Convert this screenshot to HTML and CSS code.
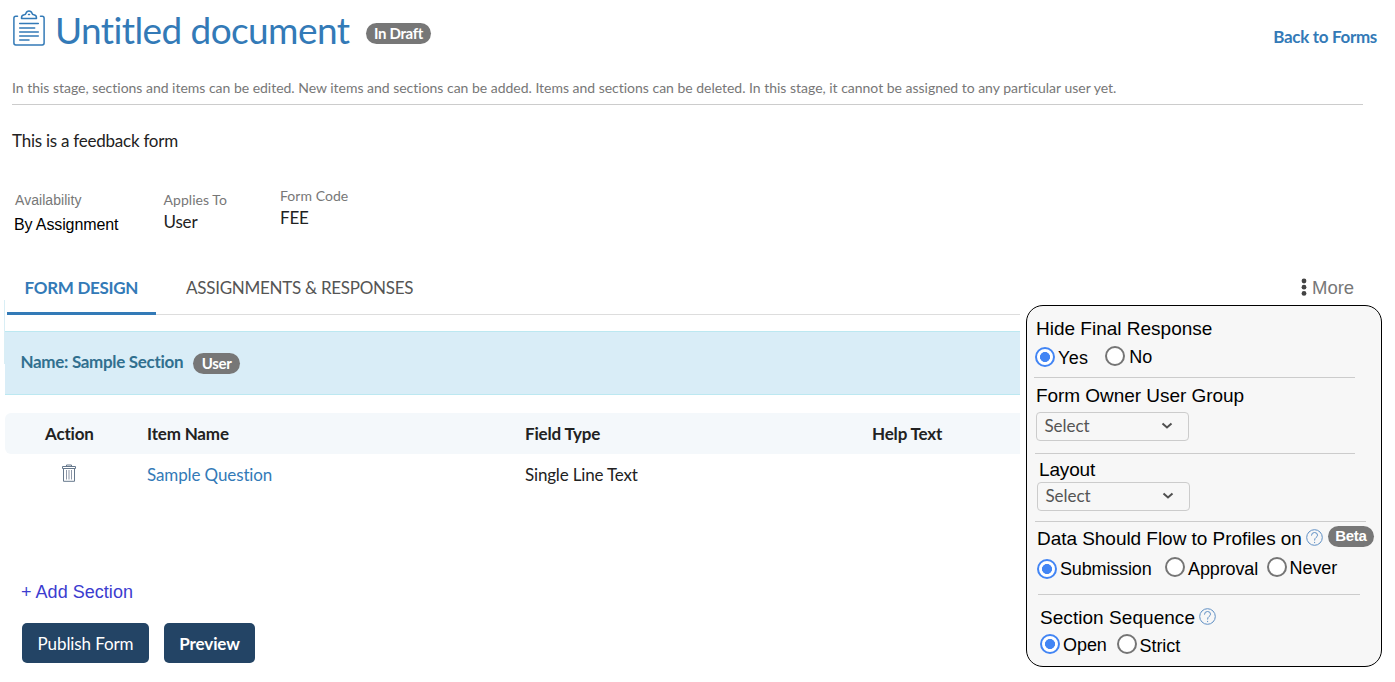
FILE: index.html
```
<!DOCTYPE html>
<html lang="en">
<head>
<meta charset="utf-8">
<title>Untitled document</title>
<link rel="stylesheet" href="styles.css">
</head>
<body>
<header class="header">
  <svg class="doc-icon" width="32" height="37" viewBox="0 0 32 37" fill="none" stroke="#337ab7" stroke-width="1.5" stroke-linecap="round" stroke-linejoin="round">
    <path d="M4.5 6.2H2.8Q.9 6.2.9 8.2V33.1Q.9 35 2.8 35H29.2Q31.1 35 31.1 33.1V8.2Q31.1 6.2 29.2 6.2H27.5"/>
    <path d="M8.5 8.4Q8.3 5 11.2 4.7Q12.6 4.6 13 3.2Q13.7.9 16 .9Q18.3.9 19 3.2Q19.4 4.6 20.8 4.7Q23.7 5 23.5 8.4Z"/>
    <path d="M15.5 4.5h1"/>
    <path d="M6.7 13.5H25.3M6.7 18H21.7M6.7 22.1H25.3M6.7 26H25.3M6.7 30H16"/>
  </svg>
  <h1 class="title">Untitled document</h1>
  <span class="badge badge-draft">In Draft</span>
  <a class="back">Back to Forms</a>
</header>
<p class="stage">In this stage, sections and items can be edited. New items and sections can be added. Items and sections can be deleted. In this stage, it cannot be assigned to any particular user yet.</p>
<p class="intro">This is a feedback form</p>
<dl class="meta">
  <div class="meta-item availability"><dt>Availability</dt><dd>By Assignment</dd></div>
  <div class="meta-item applies"><dt>Applies To</dt><dd>User</dd></div>
  <div class="meta-item code"><dt>Form Code</dt><dd>FEE</dd></div>
</dl>
<div class="content">
  <main class="design">
    <nav class="tabs">
      <a class="tab active">FORM DESIGN</a>
      <a class="tab">ASSIGNMENTS &amp; RESPONSES</a>
    </nav>
    <section class="section-bar">
      <span class="section-name">Name: Sample Section</span>
      <span class="badge badge-user">User</span>
    </section>
    <div class="row head"><span class="action">Action</span><span>Item Name</span><span>Field Type</span><span>Help Text</span></div>
    <div class="row">
      <span class="action"><svg class="trash" width="14" height="18" viewBox="0 0 14 18" fill="none" stroke="#66788c" stroke-width="1"><path d="M.5 4.5V2.5H13.5V4.5ZM4.5 2.5V1H9.5V2.5M1.5 4.5V17.3H12.5V4.5"/><path stroke="#8f98a8" d="M4.5 6V15.5M7 6V15.5M9.5 6V15.5"/></svg></span>
      <a class="link">Sample Question</a><span>Single Line Text</span><span></span>
    </div>
    <a class="add">+ Add Section</a>
    <div class="buttons"><button class="btn publish">Publish Form</button><button class="btn preview">Preview</button></div>
  </main>
  <aside class="side">
    <div class="more"><svg width="6" height="18" viewBox="0 0 6 18" fill="#444"><circle cx="3" cy="3" r="2.4"/><circle cx="3" cy="9.2" r="2.4"/><circle cx="3" cy="15.4" r="2.4"/></svg><span>More</span></div>
    <div class="panel">
      <section class="group hide">
        <h2>Hide Final Response</h2>
        <div class="options">
          <label class="yes"><i class="radio on"></i><span>Yes</span></label>
          <label class="no"><i class="radio"></i><span>No</span></label>
        </div>
      </section>
      <section class="group owner">
        <h2>Form Owner User Group</h2>
        <div class="select"><span>Select</span><svg width="12" height="8" viewBox="0 0 12 8" fill="none" stroke="#505050" stroke-width="2"><path d="M1.5 1.5L6 5.5L10.5 1.5"/></svg></div>
      </section>
      <section class="group layout">
        <h2>Layout</h2>
        <div class="select"><span>Select</span><svg width="12" height="8" viewBox="0 0 12 8" fill="none" stroke="#505050" stroke-width="2"><path d="M1.5 1.5L6 5.5L10.5 1.5"/></svg></div>
      </section>
      <section class="group flow">
        <div class="heading"><h2>Data Should Flow to Profiles on</h2>
          <svg class="help" width="17" height="17" viewBox="0 0 17 17" fill="none" stroke="#5f8fc4"><circle cx="8.5" cy="8.5" r="7.8"/><path d="M5.5 6.6Q5.5 3.5 8.5 3.5Q11.5 3.5 11.5 6.2Q11.5 7.5 10 8.5Q8.6 9.4 8.6 11.5M8.6 12.9V14.1"/></svg>
          <span class="badge badge-beta">Beta</span></div>
        <div class="options">
          <label class="submission"><i class="radio on"></i><span>Submission</span></label>
          <label class="approval"><i class="radio"></i><span>Approval</span></label>
          <label class="never"><i class="radio"></i><span>Never</span></label>
        </div>
      </section>
      <section class="group sequence">
        <div class="heading"><h2>Section Sequence</h2>
          <svg class="help" width="17" height="17" viewBox="0 0 17 17" fill="none" stroke="#5f8fc4"><circle cx="8.5" cy="8.5" r="7.8"/><path d="M5.5 6.6Q5.5 3.5 8.5 3.5Q11.5 3.5 11.5 6.2Q11.5 7.5 10 8.5Q8.6 9.4 8.6 11.5M8.6 12.9V14.1"/></svg></div>
        <div class="options">
          <label class="open"><i class="radio on"></i><span>Open</span></label>
          <label class="strict"><i class="radio"></i><span>Strict</span></label>
        </div>
      </section>
    </div>
  </aside>
</div>
</body>
</html>
```
FILE: styles.css
```
* { box-sizing: border-box; }
body { margin: 0; height: 682px; overflow: hidden; background: #fff; color: #222; font: 17px/20px Lato, sans-serif; letter-spacing: -0.17px; }
h1, h2, p, dl, dd { margin: 0; font-weight: 400; }
svg { flex: none; display: block; }

.header { display: flex; height: 74px; padding: 0 18px 0 13px; align-items: flex-start; }
.doc-icon { margin-top: 10px; }
.title { margin: 8px 0 0 10px; width: 311px; font-size: 37px; line-height: 44px; letter-spacing: -0.6px; color: #337ab7; white-space: nowrap; }
.badge { flex: none; height: 21px; border-radius: 11px; background: #777; color: #fff; font-weight: 700; font-size: 15px; line-height: 20px; letter-spacing: -0.3px; text-align: center; }
.badge-draft { width: 65px; margin-top: 23px; }
.badge-user { width: 47px; margin: 1px 0 0 10px; line-height: 21px; }
.badge-beta { width: 46px; margin: -3px 0 0 5px; }
.back { margin: 27px 0 0 auto; color: #337ab7; font-weight: 700; letter-spacing: -0.32px; }

.stage { width: 1351px; height: 31px; margin-left: 12px; padding-top: 4px; border-bottom: 1px solid #ccc; color: #777; font-size: 14px; letter-spacing: -0.015px; }
.intro { margin: 26px 0 0 12px; letter-spacing: -0.24px; }

.meta { display: flex; height: 117px; padding: 35px 0 0 14px; }
.meta dt { color: #777; font-size: 14px; letter-spacing: 0.05px; }
.availability { width: 149.5px; padding-top: 4px; font-family: "Liberation Sans", sans-serif; }
.availability dt { padding-left: 1px; }
.availability dd { margin-top: 5px; color: #000; font-size: 16px; letter-spacing: -0.12px; }
.applies { width: 116.5px; padding-top: 4px; }
.applies dd { margin-top: 2px; }
.code dd { margin-top: 2px; }

.content { display: flex; height: 414px; }
.design { width: 1020px; padding-left: 5px; background: linear-gradient(#d9eef5, #d9eef5) 4px 32px / 1px 64px no-repeat; }
.tabs { display: flex; height: 47px; margin-left: 2px; border-bottom: 1px solid #ddd; }
.tab { height: 47px; padding: 10px 30px 0; color: #555; letter-spacing: -0.27px; }
.tab.active { width: 149px; padding: 10px 0 0 17.5px; border-bottom: 3px solid #337ab7; color: #337ab7; font-weight: 700; letter-spacing: -0.3px; }
.section-bar { display: flex; height: 64px; margin-top: 16px; padding: 20px 0 0 15.5px; background: #d9edf7; border-top: 1px solid #bce8f1; border-bottom: 1px solid #bce8f1; }
.section-name { color: #31708f; font-weight: 700; letter-spacing: -0.32px; }
.row { display: grid; grid-template-columns: 142px 378px 347px 1fr; height: 41px; align-items: center; }
.head { margin-top: 18px; border-radius: 6px 0 0 6px; background: #f4f8fb; font-weight: 700; }
.action { padding-left: 40px; }
.trash { margin: -4px 0 0 17px; }
.link { color: #337ab7; letter-spacing: -0.12px; }
.add { display: block; margin: 87px 0 0 16px; color: #3c3ccf; font: 18px/20px "Liberation Sans", sans-serif; letter-spacing: 0.03px; }
.buttons { display: flex; gap: 15px; margin: 21px 0 0 17px; }
.btn { height: 40px; padding: 2px 0 0; border: 0; border-radius: 5px; background: #234465; color: #fff; font: 17px/20px Lato, sans-serif; letter-spacing: -0.1px; }
.publish { width: 127px; }
.preview { width: 91px; font-weight: 700; letter-spacing: -0.1px; }

.side { width: 356px; margin-left: 6px; font-family: "Liberation Sans", sans-serif; letter-spacing: 0; color: #000; }
.more { display: flex; height: 37px; padding: 10px 0 0 275px; gap: 5px; color: #777; font-size: 18.5px; }
.panel { height: 362px; padding: 13px 7px 0 7px; border: 1px solid #000; border-radius: 17px; background: #f7f7f7; }
.group { border-bottom: 1px solid #ccc; }
h2 { font-size: 19px; line-height: 20px; white-space: nowrap; }
.options, .heading, label { display: flex; }
label { font-size: 18px; letter-spacing: -0.05px; gap: 3px; align-items: flex-start; }
.radio { flex: none; width: 20px; height: 20px; border: 2px solid #757575; border-radius: 50%; background: #fff; }
.radio.on { border-color: #4285f4; background: radial-gradient(circle, #4285f4 4.7px, #fff 5.3px); }
.hide { width: 321px; height: 59px; }
.hide h2, .owner h2 { padding-left: 2px; }
.hide .options { margin-top: 7px; padding-left: 1px; gap: 17px; }
.yes { letter-spacing: 0.3px; }
.yes .radio { margin-top: 1px; } .yes span { margin-top: 2px; }
.no { gap: 4px; } .no span { margin-top: 1px; }
.owner { width: 320px; height: 76px; margin-left: 1px; padding-top: 8px; }
.owner h2 { padding-left: 1px; letter-spacing: -0.05px; }
.owner .select { margin: 6px 0 0 1px; }
.select { display: flex; width: 153px; height: 29px; padding: 0 15px 2px 7.5px; align-items: center; justify-content: space-between; border: 1px solid #ccc; border-radius: 4px; color: #555; font-family: Lato, sans-serif; letter-spacing: -0.05px; }
.layout { width: 331px; height: 68px; margin-left: 1px; padding-top: 6px; }
.layout h2 { padding-left: 4px; letter-spacing: -0.15px; }
.layout .select { margin: 2px 0 0 2px; }
.flow { width: 322px; height: 73px; margin-left: 4px; padding-top: 7px; }
.flow .heading, .flow .options { margin-left: -1px; }
.flow h2 { letter-spacing: -0.04px; }
.flow .help { margin: 0 0 0 4px; }
.flow .options { margin-top: 8px; }
.flow .radio.on { margin-top: 2px; } .flow .on + span { margin-top: 2px; }
.submission { width: 128px; letter-spacing: -0.15px; }
.approval { width: 102px; } .approval span { margin-top: 2px; letter-spacing: -0.13px; }
.never { gap: 2.5px; } .never span { margin-top: 1px; }
.sequence { padding: 13px 0 0 6px; border: 0; }
.sequence h2 { letter-spacing: 0.05px; }
.sequence .help { margin: 0 0 0 4px; }
.sequence .options { margin-top: 6px; }
.open { width: 77px; } .open span { margin-top: 1px; }
.strict { gap: 2.5px; } .strict span { margin-top: 2px; }
```
